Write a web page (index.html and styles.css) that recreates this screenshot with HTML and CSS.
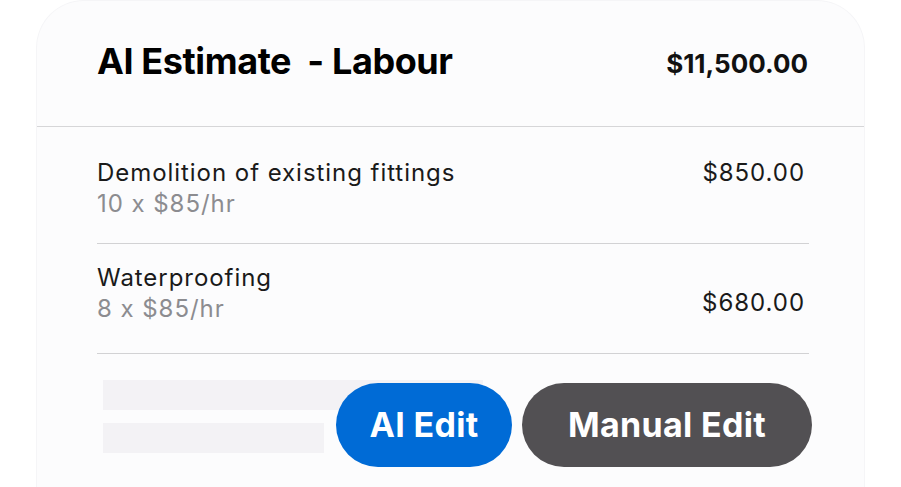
FILE: index.html
```html
<!DOCTYPE html>
<html lang="en">
<head>
<meta charset="utf-8">
<title>AI Estimate - Labour</title>
<link rel="stylesheet" href="styles.css">
</head>
<body>
<div class="card">
  <div class="card-header">
    <h1 class="title">AI Estimate&nbsp; - Labour</h1>
    <div class="total">$11,500.00</div>
  </div>
  <div class="items">
    <div class="item item-first">
      <div class="item-info">
        <div class="item-name">Demolition of existing fittings</div>
        <div class="item-sub">10 x $85/hr</div>
      </div>
      <div class="item-amount">$850.00</div>
    </div>
    <div class="item item-second">
      <div class="item-info">
        <div class="item-name">Waterproofing</div>
        <div class="item-sub">8 x $85/hr</div>
      </div>
      <div class="item-amount amount-mid">$680.00</div>
    </div>
  </div>
  <div class="footer">
    <div class="skeleton">
      <div class="skel-bar skel-long"></div>
      <div class="skel-bar skel-short"></div>
    </div>
    <div class="actions">
      <button class="btn btn-ai">AI Edit</button>
      <button class="btn btn-manual">Manual Edit</button>
    </div>
  </div>
</div>
</body>
</html>
```
FILE: styles.css
```css
html, body {
  margin: 0;
  padding: 0;
  background: #ffffff;
  height: 487px;
  overflow: hidden;
}
body {
  font-family: Inter, "Noto Sans", "Liberation Sans", sans-serif;
  color: #111111;
}
.card {
  margin-left: 36px;
  width: 829px;
  height: 487px;
  box-sizing: border-box;
  background: #fcfcfd;
  border: 1px solid #f5f5f7;
  border-bottom: none;
  border-radius: 48px 48px 0 0;
  overflow: hidden;
}
.card-header {
  height: 126px;
  box-sizing: border-box;
  display: flex;
  align-items: center;
  justify-content: space-between;
  padding: 0 56px 6px 60px;
  border-bottom: 1px solid #d6d6d8;
}
.title {
  margin: 0;
  font-size: 36px;
  font-weight: 700;
  letter-spacing: -0.4px;
  color: #000000;
}
.total {
  font-size: 26px;
  font-weight: 700;
  color: #111111;
  padding-top: 6px;
}
.items {
  margin: 0 55px 0 60px;
}
.item {
  display: flex;
  justify-content: space-between;
  align-items: flex-start;
  border-bottom: 1px solid #d2d2d4;
  padding-right: 4px;
}
.item-first {
  padding-top: 31px;
  height: 117px;
  box-sizing: border-box;
}
.item-second {
  padding-top: 19px;
  height: 110px;
  box-sizing: border-box;
}
.item-name,
.item-sub,
.item-amount {
  font-size: 24px;
  line-height: 30px;
  letter-spacing: 0.95px;
}
.item-name {
  color: #1a1a1a;
}
.item-sub {
  color: #8c8c90;
  margin-top: 1px;
}
.item-amount {
  color: #1a1a1a;
}
.amount-mid {
  margin-top: 25px;
}
.footer {
  display: grid;
  padding: 26px 52px 0 66px;
}
.skeleton,
.actions {
  grid-area: 1 / 1;
}
.skeleton {
  display: flex;
  flex-direction: column;
  gap: 13px;
  justify-self: start;
}
.skel-bar {
  background: #f3f2f5;
  height: 30px;
}
.skel-long {
  width: 380px;
}
.skel-short {
  width: 221px;
}
.actions {
  justify-self: end;
  display: flex;
  gap: 10px;
  margin-top: 3px;
  align-self: start;
}
.btn {
  height: 84px;
  border: none;
  border-radius: 42px;
  font-family: Inter, "Noto Sans", "Liberation Sans", sans-serif;
  font-size: 34px;
  font-weight: 700;
  letter-spacing: 0.3px;
  color: #ffffff;
  padding: 0 0 2px;
  cursor: pointer;
}
.btn-ai {
  width: 176px;
  background: #006bd6;
}
.btn-manual {
  width: 290px;
  background: #525053;
}
```
